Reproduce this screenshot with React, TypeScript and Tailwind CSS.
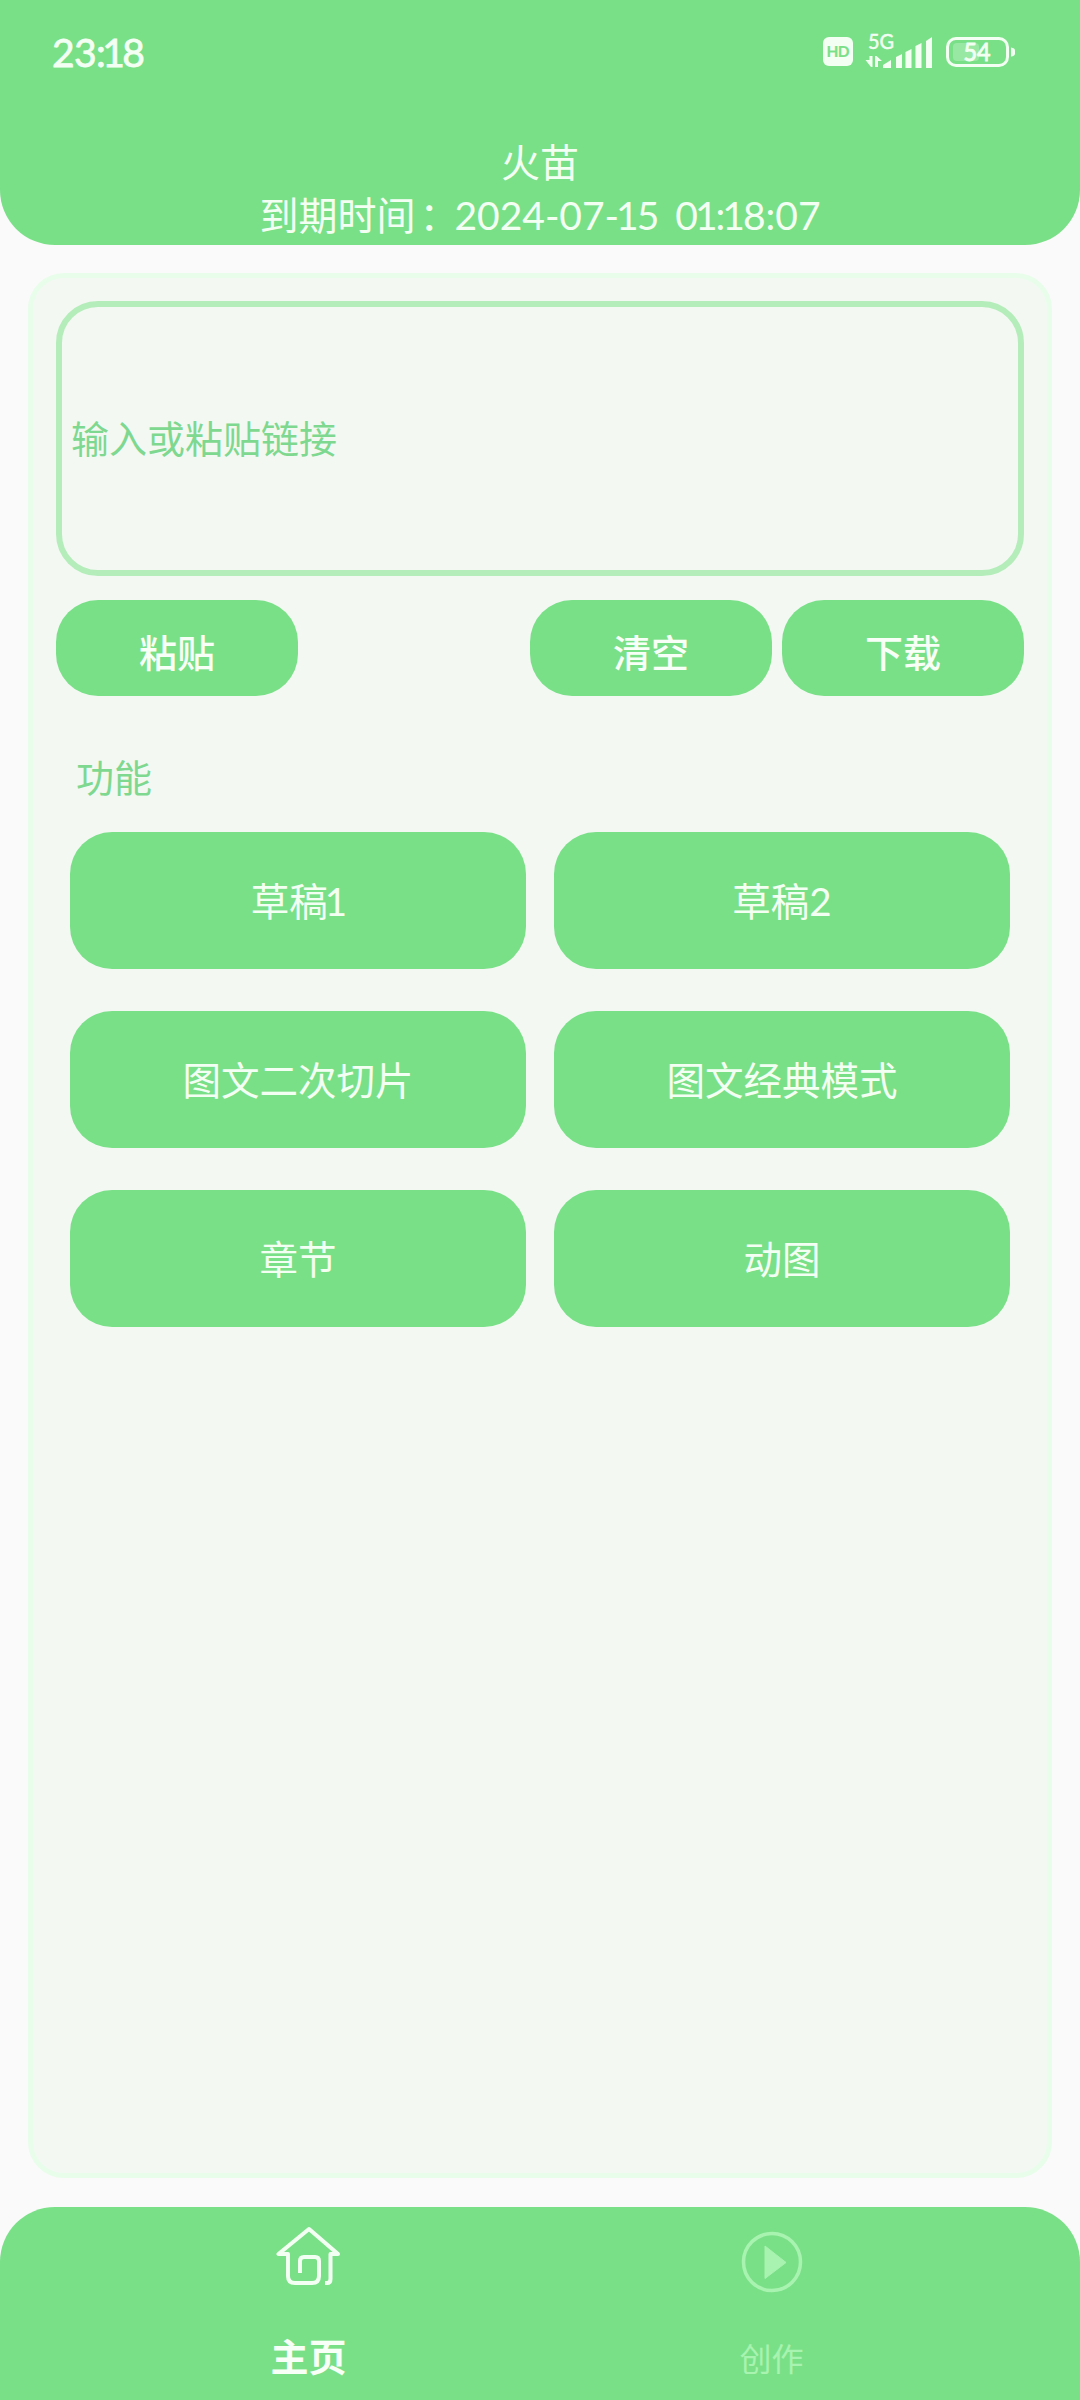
import type { ReactNode } from "react";

const tools = ["草稿1", "草稿2", "图文二次切片", "图文经典模式", "章节", "动图"];

// Sets the digit 1 on a narrower advance than the other figures.
function Figures({ text }: { text: string }) {
  return (
    <>
      {text.split(/(1)/).map((part, i) =>
        part === "1" ? (
          <span key={i} className="-mr-[2px] -ml-[3px]">
            1
          </span>
        ) : (
          part
        ),
      )}
    </>
  );
}

function StatusIcons() {
  return (
    <svg width="196" height="60" viewBox="822 22 196 60" fill="none" className="text-[#f2fff2]">
      <rect x="823" y="37" width="30" height="29" rx="6" fill="currentColor" />
      <text x="838" y="57" textAnchor="middle" fontSize="15.5" fontWeight="700" textLength="23" fill="#7ae088" stroke="#7ae088" strokeWidth="0.2">
        HD
      </text>
      <text x="868" y="49" fontSize="20.5" textLength="26" lengthAdjust="spacingAndGlyphs" fill="currentColor" stroke="currentColor" strokeWidth="0.5">
        5G
      </text>
      <path d="M865.500 60h4v-4h3v11h-1.500zM882 61h-4v6h-3v-11h1.500z" fill="currentColor" />
      <path
        d="M883 68v-3l8-5v8zM896 68V57l6-3v14zM905.500 68V52l6-3v19zM915.500 68V46l6-3v25zM926 68V41l6-4v31z"
        fill="currentColor"
      />
      <rect x="953" y="43" width="26" height="18" rx="4" fill="#98e8a4" />
      <rect x="947.500" y="38.500" width="60" height="27" rx="8.500" stroke="currentColor" strokeWidth="3" />
      <path d="M1011 47.500q4 .5 4 3v3q0 2.500-4 3z" fill="currentColor" />
      <text x="977" y="61" textAnchor="middle" fontSize="25" textLength="27" lengthAdjust="spacingAndGlyphs" fill="currentColor" stroke="currentColor" strokeWidth="1">
        54
      </text>
    </svg>
  );
}

function HomeIcon() {
  return (
    <svg width="66" height="60" viewBox="275 2226 66 60" fill="none" stroke="#f4fff4" strokeWidth="4" strokeLinecap="butt" strokeLinejoin="round">
      <path d="M324 2283h2q3.500 0 3.500-4v-25h7.500L308 2229l-30.500 25h9.500v22q0 7 7 7h17q7 0 7-7v-15q0-4-4-4h-11q-4 0-4 4v12" />
    </svg>
  );
}

function PlayIcon() {
  return (
    <svg width="62" height="62" viewBox="0 0 62 62" fill="none">
      <circle cx="31" cy="31" r="28.500" stroke="#a8f3b0" strokeWidth="3.500" />
      <path d="M24 15v32.500l21-16z" fill="#a8f3b0" stroke="#a8f3b0" strokeWidth="1" strokeLinejoin="round" />
    </svg>
  );
}

function ActionButton({ children }: { children: ReactNode }) {
  return (
    <button className="h-24 w-[242px] rounded-[42px] bg-[#7ae088] pt-2 text-[38px] leading-none font-medium text-[#f7fff7]">
      {children}
    </button>
  );
}

export default function App() {
  return (
    <div className="flex h-[2400px] w-[1080px] flex-col bg-[#fafafa] font-['Lato','Noto_Sans_CJK_SC',sans-serif]">
      <header className="h-[245px] rounded-b-[55px] bg-[#7ae088] text-[#f4fff4]">
        <div className="flex h-[104px] items-center justify-between pr-[62px] pl-[52px]">
          <span className="text-[39px] leading-none tracking-[-0.6px] [-webkit-text-stroke:0.8px_#f4fff4]">
            <Figures text="23:18" />
          </span>
          <StatusIcons />
        </div>
        <div className="flex flex-col items-center pt-8 text-[39px] leading-[53px]">
          <h1>火苗</h1>
          <p className="whitespace-pre [word-spacing:6px]">
            到期时间<span className="-mr-1 ml-1">：</span>
            <Figures text="2024-07-15 01:18:07" />
          </p>
        </div>
      </header>

      <main className="mx-7 mt-7 flex h-[1905px] flex-col rounded-[36px] border-[5px] border-[#e8fdea] bg-[#f3f8f3] px-[23px] pt-[23px]">
        <input
          placeholder="输入或粘贴链接"
          className="h-[275px] w-full rounded-[42px] border-[6px] border-[#b4edba] bg-transparent pr-2 pb-0.5 pl-[9px] text-[38px] outline-none placeholder:text-[#7fd88f]"
        />
        <div className="mt-6 flex gap-2.5">
          <ActionButton>粘贴</ActionButton>
          <div className="grow" />
          <ActionButton>清空</ActionButton>
          <ActionButton>下载</ActionButton>
        </div>
        <h2 className="mt-[55px] pl-5 text-[38px] leading-[53px] text-[#7fd88f]">功能</h2>
        <div className="mt-7 grid grid-cols-2 gap-x-7 gap-y-[42px] px-3.5">
          {tools.map((tool) => (
            <button key={tool} className="h-[137px] rounded-[42px] bg-[#7ae088] pt-0.5 text-[38.5px] leading-none text-[#f4fff4]">
              <Figures text={tool} />
            </button>
          ))}
        </div>
      </main>

      <nav className="mt-[29px] flex h-[193px] rounded-t-[55px] bg-[#7ae088] px-[77px]">
        <div className="flex flex-1 flex-col items-center pt-[19px]">
          <HomeIcon />
          <span className="mt-11 text-[38px] leading-[52px] font-bold text-[#f7fff7]">主页</span>
        </div>
        <div className="flex flex-1 flex-col items-center pt-6">
          <PlayIcon />
          <span className="mt-10 text-[32px] leading-[52px] text-[#a8f3b0]">创作</span>
        </div>
      </nav>
    </div>
  );
}
